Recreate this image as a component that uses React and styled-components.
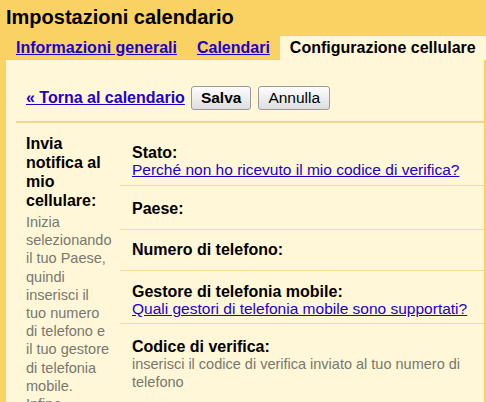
import React from "react";
import styled, { createGlobalStyle } from "styled-components";

const GlobalStyle = createGlobalStyle`
  html, body {
    margin: 0;
    padding: 0;
    background: #fad163;
    font-family: "Liberation Sans", Arial, sans-serif;
    color: #000;
  }
`;

const Page = styled.div`
  width: 486px;
  height: 402px;
  overflow: hidden;
  background: #fad163;
`;

const Title = styled.h1`
  margin: 0;
  padding: 6px 0 0 6px;
  font-size: 20px;
  line-height: 23px;
  font-weight: bold;
`;

const TabStrip = styled.div`
  display: flex;
  margin-top: 7px;
  padding-left: 6px;
  white-space: nowrap;
`;

const Tab = styled.a`
  display: block;
  padding: 0 10px;
  height: 24px;
  line-height: 24px;
  font-size: 16px;
  font-weight: bold;
  color: ${(p) => (p.$active ? "#000" : "#2200cc")};
  text-decoration: ${(p) => (p.$active ? "none" : "underline")};
  background: ${(p) => (p.$active ? "#fff7d7" : "transparent")};
  cursor: pointer;
`;

const Panel = styled.div`
  margin: 0 2px 0 6px;
  background: #fff7d7;
  height: 342px;
`;

const Toolbar = styled.div`
  display: flex;
  align-items: center;
  gap: 6px;
  margin-left: 10px;
  padding: 26px 0 11px 10px;
  border-bottom: 2px solid #efd78c;
`;

const BackLink = styled.a`
  font-size: 16px;
  font-weight: bold;
  color: #2200cc;
  text-decoration: underline;
  cursor: pointer;
`;

const Button = styled.button`
  height: 24px;
  padding: 0 ${(p) => (p.$primary ? "9px" : "9px")};
  font-family: inherit;
  font-size: 15.5px;
  font-weight: ${(p) => (p.$primary ? "bold" : "normal")};
  color: #000;
  background: linear-gradient(#fdfdfd, #dedede);
  border: 1px solid #9a9a9a;
  border-radius: 3px;
  margin-left: ${(p) => (p.$primary ? "0" : "1px")};
`;

const Body = styled.div`
  display: flex;
`;

const Sidebar = styled.div`
  box-sizing: border-box;
  width: 114px;
  flex: none;
  padding: 11px 7px 0 20px;
`;

const SideHeading = styled.div`
  font-size: 16px;
  line-height: 19px;
  font-weight: bold;
`;

const SideHelp = styled.div`
  margin-top: 3px;
  font-size: 14.5px;
  line-height: 18.2px;
  color: #787870;
`;

const Fields = styled.div`
  flex: 1;
`;

const Row = styled.div`
  padding: ${(p) => p.$pad};
  padding-left: 12px;
  border-bottom: ${(p) => (p.$last ? "none" : "1px solid #f3dc95")};
`;

const Label = styled.div`
  font-size: 16px;
  line-height: 17px;
  font-weight: bold;
`;

const HelpLink = styled.a`
  display: block;
  width: max-content;
  font-size: 15.5px;
  line-height: 17px;
  color: #2200cc;
  text-decoration: underline;
  cursor: pointer;
`;

const Hint = styled.div`
  font-size: 14.5px;
  line-height: 18px;
  color: #787870;
`;

export default function App() {
  return (
    <Page>
      <GlobalStyle />
      <Title>Impostazioni calendario</Title>
      <TabStrip>
        <Tab>Informazioni generali</Tab>
        <Tab>Calendari</Tab>
        <Tab $active>Configurazione cellulare</Tab>
      </TabStrip>
      <Panel>
        <Toolbar>
          <BackLink>« Torna al calendario</BackLink>
          <Button $primary>Salva</Button>
          <Button>Annulla</Button>
        </Toolbar>
        <Body>
          <Sidebar>
            <SideHeading>Invia notifica al mio cellulare:</SideHeading>
            <SideHelp>
              Inizia selezionando il tuo Paese, quindi inserisci il tuo numero
              di telefono e il tuo gestore di telefonia mobile. Infine,
              inserisci il codice di verifica.
            </SideHelp>
          </Sidebar>
          <Fields>
            <Row $pad="21px 0 7px">
              <Label>Stato:</Label>
              <HelpLink>Perché non ho ricevuto il mio codice di verifica?</HelpLink>
            </Row>
            <Row $pad="14px 0 12px">
              <Label>Paese:</Label>
            </Row>
            <Row $pad="11px 0 12px">
              <Label>Numero di telefono:</Label>
            </Row>
            <Row $pad="12px 0 6px">
              <Label>Gestore di telefonia mobile:</Label>
              <HelpLink>Quali gestori di telefonia mobile sono supportati?</HelpLink>
            </Row>
            <Row $pad="14px 0 0" $last>
              <Label>Codice di verifica:</Label>
              <Hint>
                inserisci il codice di verifica inviato al tuo numero di
                telefono
              </Hint>
            </Row>
          </Fields>
        </Body>
      </Panel>
    </Page>
  );
}
